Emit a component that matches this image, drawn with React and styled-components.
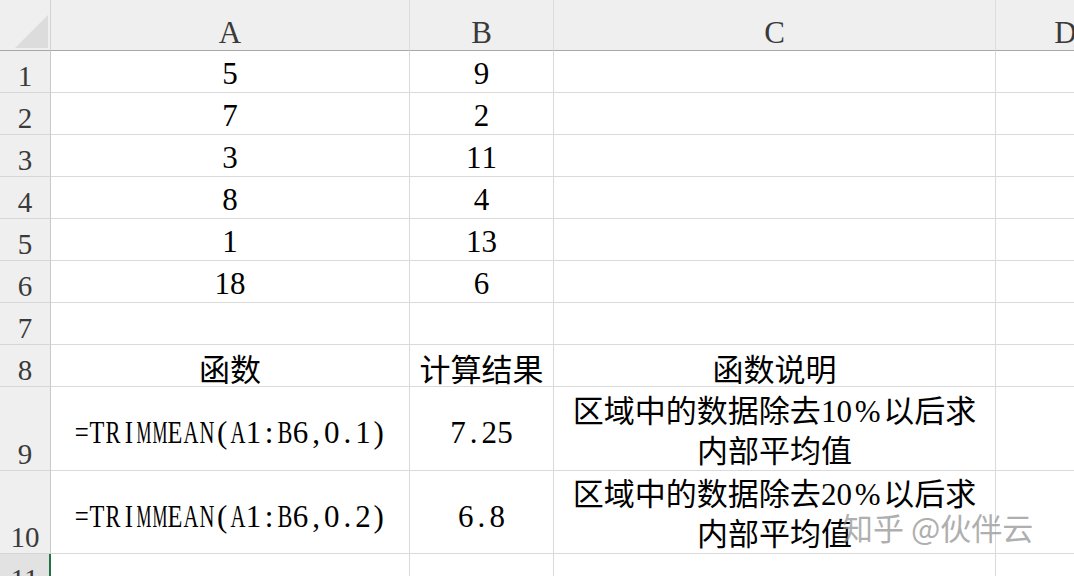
import styled, { createGlobalStyle } from "styled-components";

const GlobalStyle = createGlobalStyle`
  html, body {
    margin: 0;
    padding: 0;
    background: #fff;
    overflow: hidden;
  }
  body {
    width: 1074px;
    height: 576px;
  }
`;

const columns = ["A", "B", "C", "D"];

const rows = [
  { n: 1, a: "5", b: "9" },
  { n: 2, a: "7", b: "2" },
  { n: 3, a: "3", b: "11" },
  { n: 4, a: "8", b: "4" },
  { n: 5, a: "1", b: "13" },
  { n: 6, a: "18", b: "6" },
  { n: 7 },
  { n: 8, a: "函数", b: "计算结果", c: ["函数说明"] },
  { n: 9, a: "=TRIMMEAN(A1:B6,0.1)", b: "7.25", c: ["区域中的数据除去10%以后求", "内部平均值"], tall: true },
  { n: 10, a: "=TRIMMEAN(A1:B6,0.2)", b: "6.8", c: ["区域中的数据除去20%以后求", "内部平均值"], tall: true },
  { n: 11, active: true },
];

// advance widths (em) of the wide serif capitals, used to squeeze them into a half-width slot
const advance = { T: 0.611, R: 0.667, I: 0.333, M: 0.889, E: 0.611, A: 0.722, N: 0.722, B: 0.667, "=": 0.564 };

// SimSun-like half-width latin: every ascii char sits in a fixed slot
function SheetText({ text }) {
  const parts = [];
  let han = "";
  [...text].forEach((ch, i) => {
    if (ch.charCodeAt(0) < 128) {
      if (han) {
        parts.push(<Han key={`h${i}`}>{han}</Han>);
        han = "";
      }
      const scale = advance[ch] ? Math.min(0.8, 0.48 / advance[ch]) : 1;
      parts.push(
        <Half key={i} $scale={scale} $wide={ch === "%"}>
          {ch}
        </Half>
      );
    } else {
      han += ch;
    }
  });
  if (han) parts.push(<Han key="end">{han}</Han>);
  return parts;
}

function App() {
  return (
    <>
      <GlobalStyle />
      <Sheet>
        <Corner>
          <svg width="33" height="33" viewBox="0 0 33 33">
            <polygon points="0,33 33,33 33,0" fill="#dcdcdc" />
          </svg>
        </Corner>
        {columns.map((c) => (
          <ColHead key={c}>{c}</ColHead>
        ))}

        {rows.map((r) => (
          <Row key={r.n} r={r} />
        ))}
      </Sheet>
      <Watermark>知乎 @伙伴云</Watermark>
    </>
  );
}

function Row({ r }) {
  return (
    <>
      <RowHead $active={r.active}>{r.n}</RowHead>
      <Cell $shift={r.tall ? 9 : 5}>
        {r.a && <Line><SheetText text={r.a} /></Line>}
      </Cell>
      <Cell $shift={r.tall ? 9 : 5}>
        {r.b && <Line><SheetText text={r.b} /></Line>}
      </Cell>
      <Cell $shift={r.c && r.c.length > 1 ? 0 : 5}>
        {r.c &&
          r.c.map((line) => (
            <Line key={line} $tight={r.c.length > 1}>
              <SheetText text={line} />
            </Line>
          ))}
      </Cell>
      <Cell $last />
    </>
  );
}

const Sheet = styled.div`
  display: grid;
  grid-template-columns: 51px 359px 144px 442px 140px;
  grid-template-rows: 51px repeat(8, 42px) 84px 83px 42px;
  width: 1136px;
`;

const Corner = styled.div`
  box-sizing: border-box;
  display: flex;
  align-items: flex-end;
  justify-content: flex-end;
  padding: 0 2px 2px 0;
  background: #efefef;
  border-bottom: 1px solid #a8a8a8;
  border-right: 1px solid #d4d4d4;
`;

const ColHead = styled.div`
  box-sizing: border-box;
  display: flex;
  align-items: flex-end;
  justify-content: center;
  padding-bottom: 1px;
  background: #efefef;
  border-bottom: 1px solid #a8a8a8;
  border-right: 1px solid #dcdcdc;
  font-family: "Liberation Serif", serif;
  font-size: 31px;
  line-height: 32px;
  color: #3a3a3a;
`;

const RowHead = styled.div`
  box-sizing: border-box;
  display: flex;
  align-items: flex-end;
  justify-content: center;
  padding-bottom: 1px;
  overflow: hidden;
  background: ${(p) => (p.$active ? "#e2e2e2" : "#efefef")};
  border-bottom: 1px solid #d6d6d6;
  border-right: ${(p) => (p.$active ? "2px solid #217346" : "1px solid #cacaca")};
  font-family: "Liberation Serif", serif;
  font-size: 29px;
  line-height: 30px;
  color: #3a3a3a;
`;

const Cell = styled.div`
  box-sizing: border-box;
  display: flex;
  flex-direction: column;
  align-items: center;
  justify-content: center;
  padding-top: ${(p) => p.$shift || 0}px;
  border-bottom: 1px solid #dadada;
  border-right: ${(p) => (p.$last ? "none" : "1px solid #dadada")};
  font-size: 31px;
  color: #000;
  white-space: nowrap;
`;

const Line = styled.div`
  line-height: ${(p) => (p.$tight ? "40px" : "42px")};
  height: ${(p) => (p.$tight ? "40px" : "42px")};
`;

const Han = styled.span`
  font-family: "Noto Sans CJK SC", sans-serif;
`;

const Half = styled.span`
  display: inline-flex;
  justify-content: center;
  width: ${(p) => (p.$wide ? "1em" : "0.505em")};
  font-family: "Liberation Serif", serif;
  transform: scaleX(${(p) => p.$scale});
`;

const Watermark = styled.div`
  position: absolute;
  left: 842px;
  top: 511px;
  font-family: "Noto Sans CJK SC", sans-serif;
  font-size: 31px;
  line-height: 1;
  color: rgba(140, 140, 140, 0.7);
  white-space: nowrap;
  pointer-events: none;
`;

export default App;
